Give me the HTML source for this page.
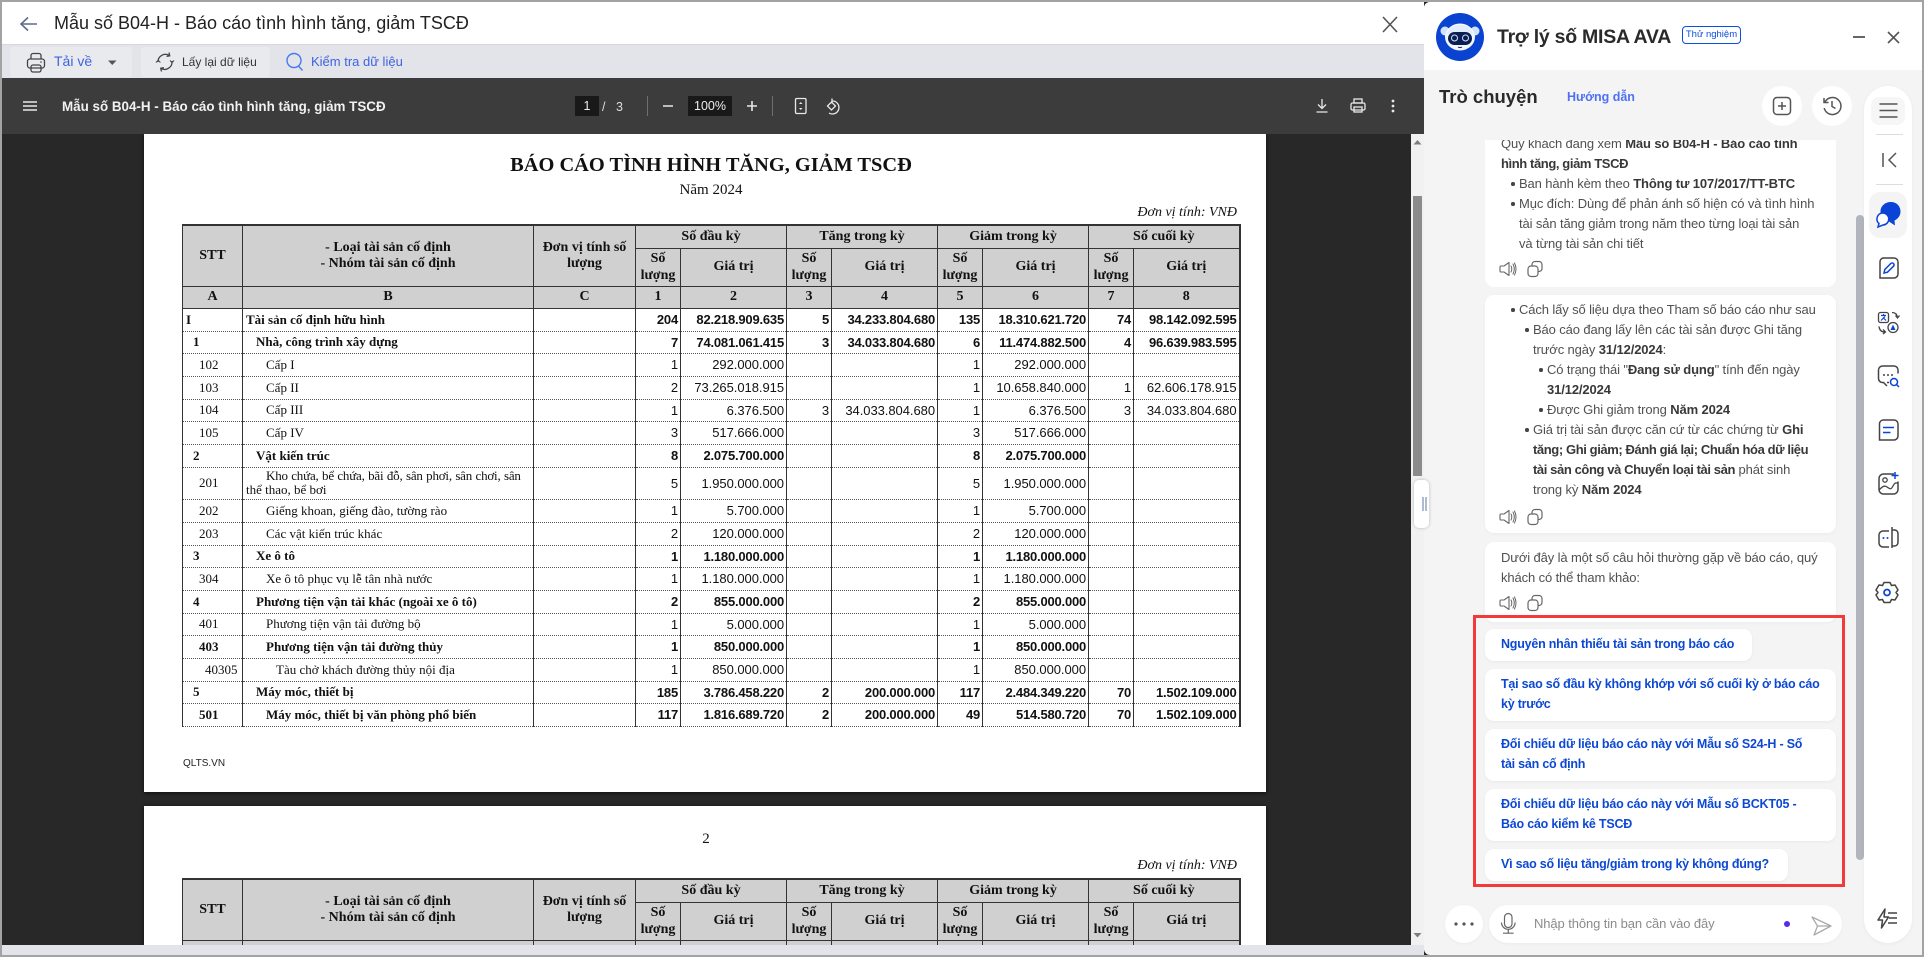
<!DOCTYPE html>
<html lang="vi"><head><meta charset="utf-8"><title>Mẫu số B04-H</title>
<style>
*{box-sizing:border-box}
html,body{margin:0;padding:0;width:1924px;height:957px;overflow:hidden;background:#282828;font-family:"Liberation Sans","Noto Sans CJK SC",sans-serif}
#root{position:absolute;left:0;top:0;width:1924px;height:957px;overflow:hidden;background:#282828}
.a{position:absolute}
.nw{white-space:nowrap}
.page{position:absolute;left:144px;width:1122px;background:#fff;box-shadow:0 1px 4px rgba(0,0,0,.7)}
.se{font-family:"Liberation Serif","Noto Serif CJK SC",serif;color:#111}
table.t{position:absolute;left:182px;width:1058px;border-collapse:collapse;table-layout:fixed;font-family:"Liberation Serif","Noto Serif CJK SC",serif;font-size:13px;color:#111;border-top:2px solid #333;border-right:2px solid #333}
table.t th{background:#d0d0d0;border:1px solid #333;padding:0;font-size:14px;font-weight:bold;line-height:16px;text-align:center;vertical-align:middle;overflow:hidden}
table.t th.sm{line-height:17px}
table.t td{border-left:1px solid #333;border-right:1px solid #333;border-bottom:1px dotted #555;padding:0;vertical-align:middle;white-space:nowrap;overflow:hidden}
table.t td.c{font-family:"Liberation Sans",sans-serif;text-align:right;padding-right:2px;font-size:13px;letter-spacing:-.05px}
tr.b td{font-weight:bold}
tr.b td.c{letter-spacing:-.2px}
.s0{padding-left:3px!important}.s1{padding-left:10px!important}.s2{padding-left:16px!important}.s3{padding-left:22px!important}
.n0{padding-left:3px!important}.n1{padding-left:13px!important}.n2{padding-left:23px!important}.n3{padding-left:33px!important}
.bub{position:absolute;left:1485px;width:351px;background:#fff;border-radius:9px;box-shadow:0 1px 3px rgba(0,0,0,.04)}
.l{position:absolute;line-height:20px;height:20px;font-size:13px;color:#505050;white-space:nowrap;letter-spacing:-.12px}
.l b{color:#383838;font-weight:bold}
.l b.x{letter-spacing:-.4px}
.sg{position:absolute;left:1485px;background:#fff;border-radius:9px;box-shadow:0 1px 3px rgba(0,0,0,.05)}
.q{position:absolute;left:1501px;line-height:20px;height:20px;font-size:12.5px;font-weight:bold;color:#0c48d4;white-space:nowrap;letter-spacing:-.22px}
.dot{position:absolute;width:3.5px;height:3.5px;border-radius:50%;background:#444}
</style></head><body>
<div id="root">

<!-- PDF viewer background -->
<div class="a" style="left:0;top:134px;width:1411px;height:811px;background:#282828"></div>

<!-- Page 1 -->
<div class="page" style="top:134px;height:658px"></div>
<div class="a se nw" style="left:144px;width:1134px;top:151px;text-align:center;font-size:20.4px;font-weight:bold;line-height:28px">BÁO CÁO TÌNH HÌNH TĂNG, GIẢM TSCĐ</div>
<div class="a se nw" style="left:144px;width:1134px;top:181px;text-align:center;font-size:15px;line-height:18px">Năm 2024</div>
<div class="a se nw" style="left:1100px;width:137px;top:204px;text-align:right;font-size:14px;font-style:italic;line-height:18px">Đơn vị tính: VNĐ</div>

<table class="t" style="top:224px">
<colgroup><col style="width:60px"><col style="width:291px"><col style="width:102px"><col style="width:45px"><col style="width:106px"><col style="width:45px"><col style="width:106px"><col style="width:45px"><col style="width:106px"><col style="width:45px"><col style="width:106px"></colgroup>
<tr style="height:23px"><th rowspan="2">STT</th><th rowspan="2">- Loại tài sản cố định<br>- Nhóm tài sản cố định</th><th rowspan="2">Đơn vị tính số lượng</th><th colspan="2">Số đầu kỳ</th><th colspan="2">Tăng trong kỳ</th><th colspan="2">Giảm trong kỳ</th><th colspan="2">Số cuối kỳ</th></tr>
<tr style="height:38px"><th class="sm">Số lượng</th><th>Giá trị</th><th class="sm">Số lượng</th><th>Giá trị</th><th class="sm">Số lượng</th><th>Giá trị</th><th class="sm">Số lượng</th><th>Giá trị</th></tr>
<tr style="height:22px"><th>A</th><th>B</th><th>C</th><th>1</th><th>2</th><th>3</th><th>4</th><th>5</th><th>6</th><th>7</th><th>8</th></tr>
<tr class="b" style="height:23px"><td class="s0">I</td><td class="n0">Tài sản cố định hữu hình</td><td></td><td class="c">204</td><td class="c">82.218.909.635</td><td class="c">5</td><td class="c">34.233.804.680</td><td class="c">135</td><td class="c">18.310.621.720</td><td class="c">74</td><td class="c">98.142.092.595</td></tr>
<tr class="b" style="height:22px"><td class="s1">1</td><td class="n1">Nhà, công trình xây dựng</td><td></td><td class="c">7</td><td class="c">74.081.061.415</td><td class="c">3</td><td class="c">34.033.804.680</td><td class="c">6</td><td class="c">11.474.882.500</td><td class="c">4</td><td class="c">96.639.983.595</td></tr>
<tr style="height:23px"><td class="s2">102</td><td class="n2">Cấp I</td><td></td><td class="c">1</td><td class="c">292.000.000</td><td class="c"></td><td class="c"></td><td class="c">1</td><td class="c">292.000.000</td><td class="c"></td><td class="c"></td></tr>
<tr style="height:23px"><td class="s2">103</td><td class="n2">Cấp II</td><td></td><td class="c">2</td><td class="c">73.265.018.915</td><td class="c"></td><td class="c"></td><td class="c">1</td><td class="c">10.658.840.000</td><td class="c">1</td><td class="c">62.606.178.915</td></tr>
<tr style="height:22px"><td class="s2">104</td><td class="n2">Cấp III</td><td></td><td class="c">1</td><td class="c">6.376.500</td><td class="c">3</td><td class="c">34.033.804.680</td><td class="c">1</td><td class="c">6.376.500</td><td class="c">3</td><td class="c">34.033.804.680</td></tr>
<tr style="height:23px"><td class="s2">105</td><td class="n2">Cấp IV</td><td></td><td class="c">3</td><td class="c">517.666.000</td><td class="c"></td><td class="c"></td><td class="c">3</td><td class="c">517.666.000</td><td class="c"></td><td class="c"></td></tr>
<tr class="b" style="height:23px"><td class="s1">2</td><td class="n1">Vật kiến trúc</td><td></td><td class="c">8</td><td class="c">2.075.700.000</td><td class="c"></td><td class="c"></td><td class="c">8</td><td class="c">2.075.700.000</td><td class="c"></td><td class="c"></td></tr>
<tr style="height:32px"><td class="s2">201</td><td style="padding-left:3px;line-height:14px"><div style="padding-left:20px;letter-spacing:-.2px;word-spacing:.4px">Kho chứa, bể chứa, bãi đỗ, sân phơi, sân chơi, sân</div><div>thể thao, bể bơi</div></td><td></td><td class="c">5</td><td class="c">1.950.000.000</td><td class="c"></td><td class="c"></td><td class="c">5</td><td class="c">1.950.000.000</td><td class="c"></td><td class="c"></td></tr>
<tr style="height:23px"><td class="s2">202</td><td class="n2">Giếng khoan, giếng đào, tường rào</td><td></td><td class="c">1</td><td class="c">5.700.000</td><td class="c"></td><td class="c"></td><td class="c">1</td><td class="c">5.700.000</td><td class="c"></td><td class="c"></td></tr>
<tr style="height:23px"><td class="s2">203</td><td class="n2">Các vật kiến trúc khác</td><td></td><td class="c">2</td><td class="c">120.000.000</td><td class="c"></td><td class="c"></td><td class="c">2</td><td class="c">120.000.000</td><td class="c"></td><td class="c"></td></tr>
<tr class="b" style="height:22px"><td class="s1">3</td><td class="n1">Xe ô tô</td><td></td><td class="c">1</td><td class="c">1.180.000.000</td><td class="c"></td><td class="c"></td><td class="c">1</td><td class="c">1.180.000.000</td><td class="c"></td><td class="c"></td></tr>
<tr style="height:23px"><td class="s2">304</td><td class="n2">Xe ô tô phục vụ lễ tân nhà nước</td><td></td><td class="c">1</td><td class="c">1.180.000.000</td><td class="c"></td><td class="c"></td><td class="c">1</td><td class="c">1.180.000.000</td><td class="c"></td><td class="c"></td></tr>
<tr class="b" style="height:23px"><td class="s1">4</td><td class="n1">Phương tiện vận tải khác (ngoài xe ô tô)</td><td></td><td class="c">2</td><td class="c">855.000.000</td><td class="c"></td><td class="c"></td><td class="c">2</td><td class="c">855.000.000</td><td class="c"></td><td class="c"></td></tr>
<tr style="height:22px"><td class="s2">401</td><td class="n2">Phương tiện vận tải đường bộ</td><td></td><td class="c">1</td><td class="c">5.000.000</td><td class="c"></td><td class="c"></td><td class="c">1</td><td class="c">5.000.000</td><td class="c"></td><td class="c"></td></tr>
<tr class="b" style="height:23px"><td class="s2">403</td><td class="n2">Phương tiện vận tải đường thủy</td><td></td><td class="c">1</td><td class="c">850.000.000</td><td class="c"></td><td class="c"></td><td class="c">1</td><td class="c">850.000.000</td><td class="c"></td><td class="c"></td></tr>
<tr style="height:23px"><td class="s3">40305</td><td class="n3">Tàu chở khách đường thủy nội địa</td><td></td><td class="c">1</td><td class="c">850.000.000</td><td class="c"></td><td class="c"></td><td class="c">1</td><td class="c">850.000.000</td><td class="c"></td><td class="c"></td></tr>
<tr class="b" style="height:22px"><td class="s1">5</td><td class="n1">Máy móc, thiết bị</td><td></td><td class="c">185</td><td class="c">3.786.458.220</td><td class="c">2</td><td class="c">200.000.000</td><td class="c">117</td><td class="c">2.484.349.220</td><td class="c">70</td><td class="c">1.502.109.000</td></tr>
<tr class="b" style="height:23px"><td class="s2">501</td><td class="n2">Máy móc, thiết bị văn phòng phổ biến</td><td></td><td class="c">117</td><td class="c">1.816.689.720</td><td class="c">2</td><td class="c">200.000.000</td><td class="c">49</td><td class="c">514.580.720</td><td class="c">70</td><td class="c">1.502.109.000</td></tr>
</table>
<div class="a nw" style="left:183px;top:758px;font-size:10px;line-height:12px;color:#222">QLTS.VN</div>

<!-- Page 2 -->
<div class="page" style="top:806px;height:139px"></div>
<div class="a se nw" style="left:144px;width:1124px;top:830px;text-align:center;font-size:15px;line-height:18px">2</div>
<div class="a se nw" style="left:1100px;width:137px;top:857px;text-align:right;font-size:14px;font-style:italic;line-height:18px">Đơn vị tính: VNĐ</div>
<table class="t" style="top:878px">
<colgroup><col style="width:60px"><col style="width:291px"><col style="width:102px"><col style="width:45px"><col style="width:106px"><col style="width:45px"><col style="width:106px"><col style="width:45px"><col style="width:106px"><col style="width:45px"><col style="width:106px"></colgroup>
<tr style="height:23px"><th rowspan="2">STT</th><th rowspan="2">- Loại tài sản cố định<br>- Nhóm tài sản cố định</th><th rowspan="2">Đơn vị tính số lượng</th><th colspan="2">Số đầu kỳ</th><th colspan="2">Tăng trong kỳ</th><th colspan="2">Giảm trong kỳ</th><th colspan="2">Số cuối kỳ</th></tr>
<tr style="height:38px"><th class="sm">Số lượng</th><th>Giá trị</th><th class="sm">Số lượng</th><th>Giá trị</th><th class="sm">Số lượng</th><th>Giá trị</th><th class="sm">Số lượng</th><th>Giá trị</th></tr>
<tr style="height:22px"><th>A</th><th>B</th><th>C</th><th>1</th><th>2</th><th>3</th><th>4</th><th>5</th><th>6</th><th>7</th><th>8</th></tr>
</table>

<!-- PDF scrollbar -->
<div class="a" style="left:1411px;top:134px;width:13px;height:811px;background:#f1f1f1"></div>
<div class="a" style="left:1413px;top:196px;width:9px;height:280px;background:#8b8b8b"></div>

<!-- App header / toolbar -->
<div class="a" style="left:0;top:0;width:1424px;height:45px;background:#fff;border-bottom:1px solid #d8d8d8"></div>
<div class="a" style="left:0;top:45px;width:1424px;height:33px;background:#e2e4ea"></div>
<div class="a nw" style="left:54px;top:12px;font-size:18px;line-height:22px;color:#222">Mẫu số B04-H - Báo cáo tình hình tăng, giảm TSCĐ</div>
<div class="a" style="left:10px;top:47px;width:122px;height:30px;background:#e9eaee;border-radius:3px"></div>
<div class="a" style="left:141px;top:47px;width:129px;height:30px;background:#e9eaee;border-radius:3px"></div>
<div class="a nw" style="left:54px;top:52px;font-size:14px;line-height:18px;color:#3f63e0">Tải về</div>
<div class="a nw" style="left:182px;top:53px;font-size:12px;line-height:18px;color:#333">Lấy lại dữ liệu</div>
<div class="a nw" style="left:311px;top:53px;font-size:13px;line-height:18px;color:#3f63e0">Kiểm tra dữ liệu</div>

<!-- PDF toolbar -->
<div class="a" style="left:0;top:78px;width:1424px;height:56px;background:#3c3c3c"></div>
<div class="a nw" style="left:62px;top:98px;font-size:13.4px;font-weight:bold;line-height:18px;color:#f1f1f1">Mẫu số B04-H - Báo cáo tình hình tăng, giảm TSCĐ</div>
<div class="a" style="left:575px;top:96px;width:24px;height:20px;background:#191919;color:#eee;font-size:12.5px;line-height:21px;text-align:center">1</div>
<div class="a nw" style="left:602px;top:97px;font-size:12.5px;line-height:20px;color:#ddd">/</div>
<div class="a nw" style="left:616px;top:97px;font-size:12.5px;line-height:20px;color:#ddd">3</div>
<div class="a" style="left:647px;top:96px;width:1px;height:20px;background:#6f6f6f"></div>
<div class="a" style="left:688px;top:96px;width:44px;height:20px;background:#191919;color:#eee;font-size:12.5px;line-height:21px;text-align:center">100%</div>
<div class="a" style="left:772px;top:96px;width:1px;height:20px;background:#6f6f6f"></div>

<!-- Bottom strip and borders -->
<div class="a" style="left:0;top:945px;width:1424px;height:10px;background:#e2e4ea"></div>
<div class="a" style="left:0;top:955px;width:1924px;height:2px;background:#a3a3a3"></div>
<div class="a" style="left:0;top:0;width:1924px;height:2px;background:#a3a3a3"></div>
<div class="a" style="left:0;top:0;width:1.5px;height:957px;background:#a3a3a3"></div>

<!-- Right panel -->
<div class="a" style="left:1424px;top:2px;width:498px;height:953px;background:#f4f4f4;border-radius:6px 0 0 6px;overflow:hidden">
  <div style="height:68px;background:#fff"></div>
</div>
<div class="a" style="left:1922px;top:0;width:2px;height:957px;background:#a3a3a3"></div>

<div class="a nw" style="left:1497px;top:24px;font-size:19.5px;font-weight:bold;line-height:26px;color:#2a2a2a;letter-spacing:-.25px">Trợ lý số MISA AVA</div>
<div class="a nw" style="left:1682px;top:26px;width:59px;height:18px;border:1px solid #0b4fe0;border-radius:4px;font-size:9.5px;line-height:16px;text-align:center;color:#0b4fe0">Thử nghiệm</div>
<div class="a nw" style="left:1439px;top:85px;font-size:18.5px;font-weight:bold;line-height:24px;color:#2a2a2a">Trò chuyện</div>
<div class="a nw" style="left:1567px;top:88px;font-size:12.5px;font-weight:bold;line-height:18px;color:#4f70f5">Hướng dẫn</div>
<div class="a" style="left:1762px;top:86px;width:40px;height:40px;border-radius:50%;background:#fff"></div>
<div class="a" style="left:1812px;top:86px;width:40px;height:40px;border-radius:50%;background:#fff"></div>

<!-- Chat scrollbar + sidebar -->
<div class="a" style="left:1856px;top:215px;width:8px;height:645px;background:#b2b5bd;border-radius:4px"></div>
<div class="a" style="left:1864px;top:86px;width:48px;height:857px;background:#fff;border-radius:24px;box-shadow:0 1px 4px rgba(0,0,0,.05)"></div>
<div class="a" style="left:1871px;top:97px;width:34px;height:28px;background:#f6f6f6;border-radius:8px"></div>
<div class="a" style="left:1876px;top:134px;width:27px;height:1px;background:#ddd"></div>
<div class="a" style="left:1876px;top:184px;width:27px;height:1px;background:#ddd"></div>
<div class="a" style="left:1869px;top:192px;width:38px;height:46px;background:#f4f4f4;border-radius:11px"></div>

<!-- Chat messages -->
<div class="a" style="left:1485px;top:140px;width:351px;height:147px;overflow:hidden">
  <div style="position:absolute;left:0;top:-10px;width:351px;height:157px;background:#fff;border-radius:9px"></div>
  <div class="l" style="left:16px;top:-6px">Quý khách đang xem <b>Mẫu số B04-H - Báo cáo tình</b></div>
  <div class="l" style="left:16px;top:14px"><b class="x">hình tăng, giảm TSCĐ</b></div>
  <div class="l" style="left:34px;top:34px">Ban hành kèm theo <b>Thông tư 107/2017/TT-BTC</b></div>
  <div class="l" style="left:34px;top:54px">Mục đích: Dùng để phản ánh số hiện có và tình hình</div>
  <div class="l" style="left:34px;top:74px">tài sản tăng giảm trong năm theo từng loại tài sản</div>
  <div class="l" style="left:34px;top:94px">và từng tài sản chi tiết</div>
</div>
<div class="dot" style="left:1511px;top:182px"></div>
<div class="dot" style="left:1511px;top:202px"></div>

<div class="bub" style="top:295px;height:238px"></div>
<div class="l" style="left:1519px;top:300px">Cách lấy số liệu dựa theo Tham số báo cáo như sau</div>
<div class="l" style="left:1533px;top:320px">Báo cáo đang lấy lên các tài sản được Ghi tăng</div>
<div class="l" style="left:1533px;top:340px">trước ngày <b>31/12/2024</b>:</div>
<div class="l" style="left:1547px;top:360px">Có trạng thái "<b>Đang sử dụng</b>" tính đến ngày</div>
<div class="l" style="left:1547px;top:380px"><b>31/12/2024</b></div>
<div class="l" style="left:1547px;top:400px">Được Ghi giảm trong <b>Năm 2024</b></div>
<div class="l" style="left:1533px;top:420px">Giá trị tài sản được căn cứ từ các chứng từ <b>Ghi</b></div>
<div class="l" style="left:1533px;top:440px"><b class="x">tăng; Ghi giảm; Đánh giá lại; Chuẩn hóa dữ liệu</b></div>
<div class="l" style="left:1533px;top:460px"><b class="x">tài sản công và Chuyển loại tài sản</b> phát sinh</div>
<div class="l" style="left:1533px;top:480px">trong kỳ <b>Năm 2024</b></div>
<div class="dot" style="left:1511px;top:308px"></div>
<div class="dot" style="left:1525px;top:328px"></div>
<div class="dot" style="left:1539px;top:368px"></div>
<div class="dot" style="left:1539px;top:408px"></div>
<div class="dot" style="left:1525px;top:428px"></div>

<div class="bub" style="top:542px;height:80px"></div>
<div class="l" style="left:1501px;top:548px">Dưới đây là một số câu hỏi thường gặp về báo cáo, quý</div>
<div class="l" style="left:1501px;top:568px">khách có thể tham khảo:</div>

<!-- Suggestions -->
<div class="sg" style="top:629px;width:267px;height:32px"></div>
<div class="q" style="top:634px">Nguyên nhân thiếu tài sản trong báo cáo</div>
<div class="sg" style="top:669px;width:351px;height:52px"></div>
<div class="q" style="top:674px">Tại sao số đầu kỳ không khớp với số cuối kỳ ở báo cáo</div>
<div class="q" style="top:694px">kỳ trước</div>
<div class="sg" style="top:729px;width:351px;height:52px"></div>
<div class="q" style="top:734px">Đối chiếu dữ liệu báo cáo này với Mẫu số S24-H - Số</div>
<div class="q" style="top:754px">tài sản cố định</div>
<div class="sg" style="top:789px;width:351px;height:52px"></div>
<div class="q" style="top:794px">Đối chiếu dữ liệu báo cáo này với Mẫu số BCKT05 -</div>
<div class="q" style="top:814px">Báo cáo kiểm kê TSCĐ</div>
<div class="sg" style="top:849px;width:303px;height:32px"></div>
<div class="q" style="top:854px">Vì sao số liệu tăng/giảm trong kỳ không đúng?</div>
<div class="a" style="left:1473px;top:615px;width:372px;height:272px;border:3px solid #f23a3a"></div>

<!-- Input -->
<div class="a" style="left:1445px;top:905px;width:38px;height:38px;border-radius:50%;background:#fff;box-shadow:0 1px 3px rgba(0,0,0,.04)"></div>
<div class="a" style="left:1489px;top:905px;width:353px;height:38px;border-radius:19px;background:#fff;box-shadow:0 1px 3px rgba(0,0,0,.04)"></div>
<div class="a nw" style="left:1534px;top:914px;font-size:13px;line-height:20px;color:#8b8b8b;letter-spacing:-.1px">Nhập thông tin bạn cần vào đây</div>

<!-- Handle -->
<div class="a" style="left:1414px;top:480px;width:15px;height:48px;background:#fff;border-radius:5px;box-shadow:0 0 3px rgba(0,0,0,.25)"></div>
<div class="a" style="left:1422px;top:497px;width:2px;height:14px;background:#aebbd0"></div>
<div class="a" style="left:1425px;top:497px;width:2px;height:14px;background:#aebbd0"></div>

<!-- Icons -->
<svg class="a" style="left:0;top:0" width="1924" height="957" viewBox="0 0 1924 957" fill="none">
<defs>
<g id="spk" stroke="#666" stroke-width="1.1" fill="none" stroke-linejoin="round" stroke-linecap="round"><path d="M-7-3h3l5-3.5v13l-5-3.5h-3a1 1 0 0 1-1-1v-4a1 1 0 0 1 1-1z"/><path d="M3-3q1.6 3 0 6M5-5q2.6 5 0 10M6.500-6q3 6 0 12" stroke-width="1"/></g>
<g id="cpy" stroke="#666" stroke-width="1.2" fill="none"><rect x="-7" y="-3" width="10" height="10.500" rx="3"/><path d="M-3-3.500v-1a3 3 0 0 1 3-3h4a3 3 0 0 1 3 3v4a3 3 0 0 1-3 3h-1"/></g>
</defs>
<!-- header -->
<path d="M37 24H21M28 17.500L21 24l7 6.500" stroke="#5d6c88" stroke-width="1.600"/>
<path d="M1383 17l14 15M1397 17l-14 15" stroke="#555" stroke-width="1.600"/>
<!-- printer -->
<g stroke="#444" stroke-width="1.300"><path d="M31 59v-3.500a2 2 0 0 1 2-2h6a2 2 0 0 1 2 2V59"/><rect x="27.500" y="59" width="17" height="9" rx="2.500"/><rect x="31" y="65" width="10" height="7" rx="2"/></g><circle cx="41" cy="62" r=".8" fill="#444"/>
<path d="M108 60.500h8.500l-4.250 4.500z" fill="#555"/>
<!-- refresh -->
<g stroke="#444" stroke-width="1.300"><path d="M158 62a7.500 7.500 0 0 1 11.500-6.500M172 61a7.500 7.500 0 0 1-11 7.500"/><path d="M169 52.500l.7 3.300-3.200.5M161.500 71.500l-.8-3.200 3.200-.6"/></g><path d="M156 62.500l2.200-2.200 2.200 2.200" stroke="#444"/><path d="M170 60.500l2 2 2-2" stroke="#444"/>
<!-- search -->
<circle cx="294" cy="60.500" r="7" stroke="#4a78f0" stroke-width="1.400"/><path d="M298.500 66l4 4.500" stroke="#4a78f0" stroke-width="1.400"/>
<!-- pdf toolbar -->
<path d="M23 102h14M23 106h14M23 110h14" stroke="#e8e8e8" stroke-width="1.400"/>
<path d="M663 106h10M747 106h10M752 101v10" stroke="#e8e8e8" stroke-width="1.600"/>
<rect x="795.500" y="98.500" width="10.500" height="15" rx="1.200" stroke="#e8e8e8" stroke-width="1.300"/>
<path d="M799 104l1.750-2 1.750 2zM799 108l1.750 2 1.750-2z" fill="#e8e8e8"/>
<g stroke="#e8e8e8" stroke-width="1.300"><path d="M832 101a6.500 6.500 0 1 1-3 12"/><path d="M827.500 106l4-4 4 4-4 4z"/><path d="M832 98.500v5"/></g>
<path d="M1322 99v9M1318 104.500l4 4 4-4M1316.500 112h11" stroke="#e8e8e8" stroke-width="1.300"/>
<g stroke="#e8e8e8" stroke-width="1.300"><rect x="1354" y="99" width="8" height="4"/><rect x="1351" y="103" width="14" height="7" rx="1.500"/><rect x="1354" y="107" width="8" height="5"/></g>
<circle cx="1393" cy="101" r="1.400" fill="#e8e8e8"/><circle cx="1393" cy="106" r="1.400" fill="#e8e8e8"/><circle cx="1393" cy="111" r="1.400" fill="#e8e8e8"/>
<!-- scroll arrows -->
<path d="M1417.500 140l-4 4.500h8z" fill="#7d7d7d"/><path d="M1417.500 937.500l-4-4.500h8z" fill="#7d7d7d"/>
<!-- logo -->
<circle cx="1460" cy="37" r="24" fill="#0a43cf"/>
<circle cx="1445" cy="31" r="4.500" fill="#cfe3fb"/><circle cx="1475" cy="31" r="4.500" fill="#cfe3fb"/>
<ellipse cx="1460" cy="37" rx="15" ry="13.500" fill="#f3f7fe"/>
<path d="M1447 34c2-7 8-9 13-9 5 0 11 2 13 9z" fill="#d9e8fb" opacity=".7"/>
<rect x="1448" y="32" width="24" height="13" rx="6.500" fill="#0b1e52"/>
<circle cx="1454.500" cy="38" r="3" stroke="#cfe3ff" stroke-width="1"/><circle cx="1465.500" cy="38" r="3" stroke="#cfe3ff" stroke-width="1"/>
<path d="M1458 47q2 1.300 4 0" stroke="#0b1e52" stroke-width="1"/>
<!-- panel header -->
<path d="M1853 37h12" stroke="#555" stroke-width="1.800"/>
<path d="M1888 32l11 11M1899 32l-11 11" stroke="#555" stroke-width="1.600"/>
<!-- circle buttons -->
<rect x="1773.500" y="97.500" width="17" height="17" rx="3.500" stroke="#555" stroke-width="1.500"/><path d="M1778 106h8M1782 102v8" stroke="#555" stroke-width="1.500"/>
<path d="M1825 102a8.500 8.500 0 1 1-.8 6M1824 98v4.500h4.500M1832 101v5.500l3.500 2" stroke="#555" stroke-width="1.500"/>
<!-- sidebar -->
<path d="M1879.500 104h18M1879.500 110.500h18M1879.500 117h18" stroke="#555" stroke-width="1.500"/>
<path d="M1883 153v14M1896 153l-7 7 7 7" stroke="#555" stroke-width="1.500"/>
<!-- chat -->
<path d="M1891 202c-6 0-10.500 4-10.500 9.500 0 5 3.500 9 8.500 10l6 4-.5-5c3.500-1.500 6-5 6-9 0-5.500-4-9.500-9.500-9.500z" fill="#0a43d6"/>
<path d="M1882.500 213a6 6 0 0 1 .5 12l-5 2 1-3.500a6 6 0 0 1 3.500-10.500z" fill="#fff" stroke="#0a43d6" stroke-width="1.500"/>
<!-- pencil -->
<path d="M1883 258h11a4 4 0 0 1 4 4v12a4 4 0 0 1-4 4h-14v-16a4 4 0 0 1 3-4z" stroke="#444" stroke-width="1.500"/>
<path d="M1884 273l.8-3.500 6-6a1.900 1.900 0 0 1 2.700 2.700l-6 6z" stroke="#0a43d6" stroke-width="1.500"/>
<!-- translate -->
<rect x="1878.500" y="312.500" width="10" height="10" rx="2" stroke="#444" stroke-width="1.300"/><path d="M1881 315.500h5M1883.500 314v2M1881 320.500l4-4M1886 320.500l-3-3" stroke="#0a43d6" stroke-width="1.200"/>
<circle cx="1893" cy="327.500" r="5" stroke="#444" stroke-width="1.300"/><path d="M1890.500 330l2.500-5.500 2.500 5.500z" fill="#0a43d6"/>
<path d="M1892 312.500c3 0 5 1.700 5.500 5M1879 326.500c.5 3.500 2.500 5.500 5.500 5.500M1895.500 315.500l2 2.500 2-2.500M1883 329.500l2.500 2.500-2.500 2" stroke="#444" stroke-width="1.300"/>
<!-- chat search -->
<path d="M1888 366h6a4 4 0 0 1 4 4v3.500M1888 366h-5.500a4 4 0 0 0-4 4v8.500a4 4 0 0 0 4 4h1l3.500 3.500M1887 382.500h2" stroke="#444" stroke-width="1.500"/>
<circle cx="1884" cy="375" r="1" fill="#444"/><circle cx="1888" cy="375" r="1" fill="#444"/><circle cx="1892" cy="375" r="1" fill="#444"/>
<circle cx="1894" cy="382" r="3.500" stroke="#0a43d6" stroke-width="1.500"/><path d="M1896.500 384.500l2.500 2.500" stroke="#0a43d6" stroke-width="1.500"/>
<!-- note -->
<path d="M1883 420h11a4 4 0 0 1 4 4v12a4 4 0 0 1-4 4h-14.500v-16.500a4 4 0 0 1 3.500-3.500z" stroke="#444" stroke-width="1.500"/>
<path d="M1883 427.500h11M1883 432.500h7.500" stroke="#0a43d6" stroke-width="1.500"/>
<!-- image -->
<path d="M1894 474h-10.500a4.500 4.500 0 0 0-4.500 4.500v11a4.500 4.500 0 0 0 4.500 4.500h10a4.500 4.500 0 0 0 4.500-4.500v-8" stroke="#444" stroke-width="1.500"/>
<circle cx="1885" cy="480" r="2.200" stroke="#444" stroke-width="1.300"/><path d="M1879 490c3-3 5-5 8-3s4 3 6-1 3-3 5-3" stroke="#444" stroke-width="1.300"/>
<path d="M1895 472v7M1891.500 475.500h7" stroke="#0a43d6" stroke-width="1.500"/>
<!-- panels -->
<path d="M1889 531h-6a4 4 0 0 0-4 4v8a4 4 0 0 0 4 4h6M1892 530h2.500a3.500 3.500 0 0 1 3.500 3.500v9a3.500 3.500 0 0 1-3.500 3.500H1892M1892 527v21" stroke="#444" stroke-width="1.500"/>
<circle cx="1883.500" cy="538" r="1" fill="#0a43d6"/><circle cx="1887.500" cy="538" r="1" fill="#0a43d6"/>
<!-- settings -->
<path d="M1884 582.500h6l1.500 3 3.500-.5 3 5-2 2.500 2 2.500-3 5-3.500-.5-1.500 3h-6l-1.500-3-3.500.5-3-5 2-2.500-2-2.500 3-5 3.500.5z" stroke="#444" stroke-width="1.500" stroke-linejoin="round"/>
<circle cx="1887" cy="592.500" r="3" stroke="#0a43d6" stroke-width="1.700"/>
<!-- flash -->
<path d="M1885 909l-7 11h4.500l-1 8 7-11h-4.500z" stroke="#444" stroke-width="1.500" stroke-linejoin="round"/>
<path d="M1888 913h9M1889 918h8M1888 923h9" stroke="#444" stroke-width="1.500"/>
<!-- message actions -->
<use href="#spk" x="1508" y="269"/><use href="#cpy" x="1535" y="269"/>
<use href="#spk" x="1508" y="517"/><use href="#cpy" x="1535" y="517"/>
<use href="#spk" x="1508" y="603"/><use href="#cpy" x="1535" y="603"/>
<!-- input -->
<circle cx="1456" cy="924" r="1.600" fill="#555"/><circle cx="1464" cy="924" r="1.600" fill="#555"/><circle cx="1472" cy="924" r="1.600" fill="#555"/>
<rect x="1504.500" y="913.500" width="7.500" height="14" rx="3.750" stroke="#666" stroke-width="1.200"/>
<path d="M1501.500 922.500a6.800 6.800 0 0 0 13.600 0M1508.300 929.500v3.500M1503 933.200h10.600" stroke="#666" stroke-width="1.200"/>
<circle cx="1787" cy="924" r="3" fill="#5a2be8"/>
<path d="M1812 917l19 9-17 9 3.500-9zM1817.500 926h13.500" stroke="#aaa" stroke-width="1.300" stroke-linejoin="round"/>
</svg>
</div>
</body></html>
